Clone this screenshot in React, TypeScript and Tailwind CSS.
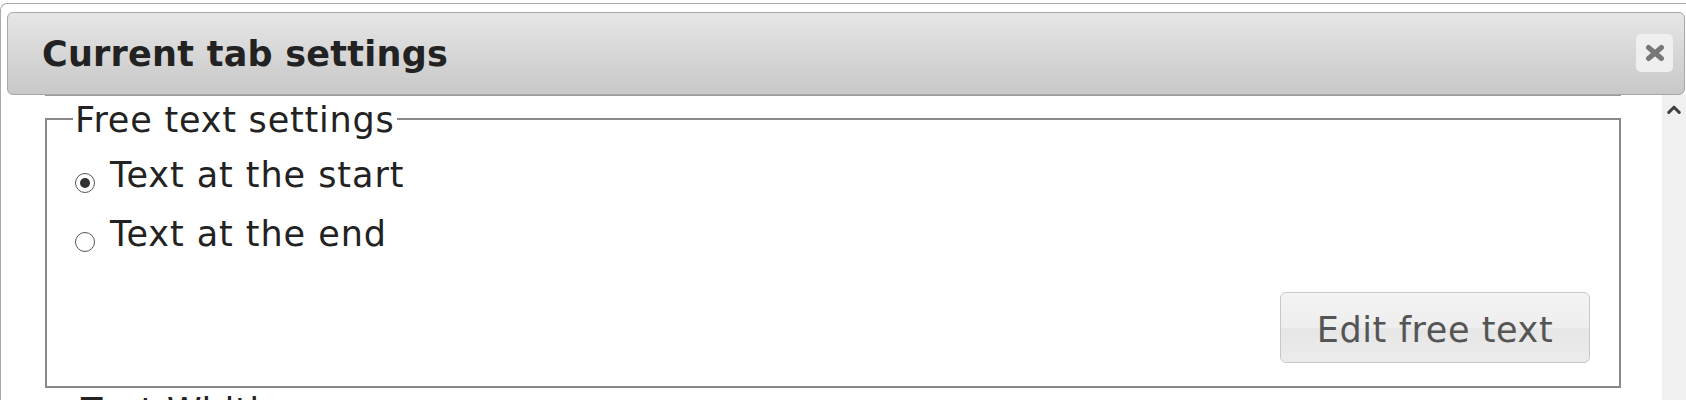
import React from "react";

function CloseIcon() {
  return (
    <svg width="22" height="18" viewBox="0 0 22 18" fill="none">
      <path d="M4.5 3.5 L17.5 14.5 M17.5 3.5 L4.5 14.5" stroke="#777777" strokeWidth="5" strokeLinecap="round" />
    </svg>
  );
}

function Chevron() {
  return (
    <svg width="14" height="9" viewBox="0 0 14 9" fill="none">
      <path d="M1.8 7.4 L7 2.2 L12.2 7.4" stroke="#404040" strokeWidth="3" strokeLinecap="round" strokeLinejoin="round" />
    </svg>
  );
}

function Radio({ checked, label }: { checked: boolean; label: string }) {
  return (
    <div className="flex items-start h-[41px]">
      <span className="mt-[18px] w-[20px] h-[20px] rounded-full border border-[#555] bg-white flex items-center justify-center shrink-0">
        {checked && <span className="w-[10px] h-[10px] rounded-full bg-[#333]" />}
      </span>
      <span className="ml-[15px] leading-[41px] tracking-[0.95px] text-[#222] whitespace-nowrap">{label}</span>
    </div>
  );
}

export default function App() {
  return (
    <div className="w-[1686px] h-[400px] overflow-hidden bg-white font-['DejaVu_Sans',Verdana,sans-serif] text-[35px]">
      <div className="mt-[3px] h-[397px] border-t border-l border-[#aaaaaa] rounded-tl-[7px] flex flex-col">
        <div className="pl-[6px] pr-[1px] pt-[8px]">
          <div className="h-[83px] border border-[#a8a8a8] rounded-[6px] bg-linear-to-b from-[#e6e6e6] to-[#c8c8c8] flex items-start justify-between pl-[34px] pr-[11px]">
            <h1 className="mt-[21px] leading-[41px] font-bold tracking-[0.25px] text-[#222] whitespace-nowrap">Current tab settings</h1>
            <button className="mt-[21px] w-[37px] h-[38px] rounded-[5px] bg-[#efefef] flex items-center justify-center">
              <CloseIcon />
            </button>
          </div>
        </div>
        <div className="flex flex-1 min-h-0">
          <div className="flex-1 min-w-0 pl-[44px] pr-[41px]">
            <div className="border-t border-[#9a9a9a]">
              <fieldset className="border-2 border-[#888888] m-0 p-0">
                <legend className="ml-[26px] px-[2px] pt-[4px] leading-[41px] tracking-[0.8px] text-[#222] whitespace-nowrap">Free text settings</legend>
                <div className="pl-[28px] mt-[14px] flex flex-col gap-[18px]">
                  <Radio checked label="Text at the start" />
                  <Radio checked={false} label="Text at the end" />
                </div>
                <div className="flex justify-end pr-[29px] mt-[37px] pb-[23px]">
                  <button className="w-[310px] h-[71px] pt-[6px] rounded-[6px] border border-[#c8c8c8] bg-[linear-gradient(to_bottom,#f3f3f3_0%,#eeeeee_50%,#e6e6e6_52%,#ececec_100%)] text-[#555] leading-[41px] tracking-[0.6px] flex items-center justify-center whitespace-nowrap">
                    Edit free text
                  </button>
                </div>
              </fieldset>
              <div className="pl-[36px] mt-[3px] leading-[41px] tracking-[0.8px] text-[#222] whitespace-nowrap">Text Width</div>
            </div>
          </div>
          <div className="w-[24px] bg-[#f0f0f0] flex justify-center pt-[10px]">
            <div className="h-[9px]">
              <Chevron />
            </div>
          </div>
        </div>
      </div>
    </div>
  );
}
